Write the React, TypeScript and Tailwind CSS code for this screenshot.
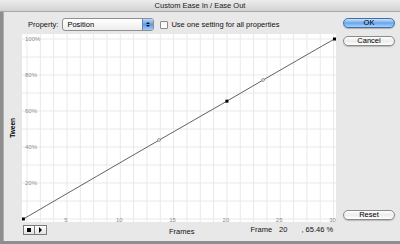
import React from 'react';

const FONT = "font-['Liberation_Sans',Arial,sans-serif]";

// x position of a frame and y position of a percent, inside the plot svg
const fx = (f: number) => -8.3 + 10.66 * f;
const py = (p: number) => 185 - 1.8 * p;

const Chart: React.FC = () => {
    const hLines = Array.from({ length: 11 }, (_, i) => 5 + i * 18);
    const vLines = Array.from({ length: 24 }, (_, i) => 5 + i * 13.33);
    const pct = [100, 80, 60, 40, 20];
    const frames = [5, 10, 15, 20, 25, 30];

    const p0 = { x: fx(1) - 1, y: py(0) };
    const p1 = { x: fx(20), y: py(65.46) };
    const p2 = { x: fx(30) + 1, y: py(100) };
    const h1 = { x: 137, y: 106 };
    const h2 = { x: 241, y: 46 };

    return (
        <svg width="314" height="188" className="block">
            {hLines.map((y) => (
                <line key={'h' + y} x1="0" x2="314" y1={y} y2={y} stroke="#e9e9e9" strokeWidth="1" />
            ))}
            {vLines.map((x) => (
                <line key={'v' + x} x1={x} x2={x} y1="0" y2="188" stroke="#e9e9e9" strokeWidth="1" />
            ))}
            {pct.map((p) => (
                <text key={p} x="3" y={py(p) + 2} fontSize="6" fill="#8e8e8e" fontFamily="Liberation Sans, Arial, sans-serif">
                    {p}%
                </text>
            ))}
            {frames.map((f) => (
                <text key={f} x={fx(f) - 1} y="188" fontSize="6" fill="#8e8e8e" textAnchor="middle" fontFamily="Liberation Sans, Arial, sans-serif">
                    {f}
                </text>
            ))}
            <path
                d={`M${p0.x} ${p0.y} C${p0.x + 60} ${p0.y - 35} ${h1.x} ${h1.y} ${p1.x} ${p1.y} C${h2.x} ${h2.y} ${p2.x - 30} ${p2.y + 17} ${p2.x} ${p2.y}`}
                fill="none"
                stroke="#3a3a3a"
                strokeWidth="0.8"
            />
            <circle cx={h1.x} cy={h1.y} r="1.4" fill="#fff" stroke="#555" strokeWidth="0.6" />
            <circle cx={h2.x} cy={h2.y} r="1.4" fill="#fff" stroke="#555" strokeWidth="0.6" />
            <rect x={p0.x - 1.5} y={p0.y - 1.5} width="3" height="3" fill="#000" />
            <rect x={p1.x - 1.5} y={p1.y - 1.5} width="3" height="3" fill="#000" />
            <rect x={p2.x - 1.5} y={p2.y - 1.5} width="3" height="3" fill="#000" />
        </svg>
    );
};

const AquaButton: React.FC<{ label: string; primary?: boolean }> = ({ label, primary }) => (
    <div
        className={
            primary
                ? 'h-[10px] w-[52px] rounded-full border border-[#3c6fb0] bg-gradient-to-b from-[#cfe4fb] via-[#6aa6ea] to-[#a9d2fb] flex items-center justify-center text-[7.5px] leading-none text-black shadow-[0_1px_1px_rgba(0,0,0,0.25)]'
                : 'h-[10px] w-[52px] rounded-full border border-[#8a8a8a] bg-gradient-to-b from-[#ffffff] via-[#ececec] to-[#ffffff] flex items-center justify-center text-[7.5px] leading-none text-black shadow-[0_1px_1px_rgba(0,0,0,0.2)]'
        }
    >
        {label}
    </div>
);

export default function App() {
    return (
        <div className={`w-[400px] h-[244px] flex flex-col bg-[#8e8e8e] ${FONT} select-none overflow-hidden`}>
            {/* Title bar */}
            <div className="h-[12px] shrink-0 bg-gradient-to-b from-[#ededed] to-[#d2d2d2] border-b border-[#a6a6a6] flex items-center justify-center">
                <span className="text-[7.5px] leading-none text-[#1a1a1a]">Custom Ease In / Ease Out</span>
            </div>

            {/* Body */}
            <div className="flex-1 flex ml-[3px] mb-[3px] bg-[#e8e8e8] border-l border-[#b0b0b0]">
                {/* Main column */}
                <div className="w-[332px] flex flex-col pt-[6px]">
                    {/* Property row */}
                    <div className="h-[13px] flex items-center pl-[24px]">
                        <span className="text-[7.5px] leading-none text-[#111]">Property:</span>
                        <div className="ml-[4px] w-[92px] h-[13px] flex rounded-[3px] border border-[#8f8f8f] bg-gradient-to-b from-[#ffffff] to-[#ededed] overflow-hidden">
                            <span className="flex-1 pl-[4px] flex items-center text-[7.5px] leading-none text-black">Position</span>
                            <div className="w-[11px] bg-gradient-to-b from-[#b9d8fa] via-[#5d9ee8] to-[#9fcbf7] border-l border-[#5f87b8] flex flex-col items-center justify-center gap-[1px]">
                                <div className="w-0 h-0 border-l-[2px] border-r-[2px] border-b-[2px] border-l-transparent border-r-transparent border-b-[#111]" />
                                <div className="w-0 h-0 border-l-[2px] border-r-[2px] border-t-[2px] border-l-transparent border-r-transparent border-t-[#111]" />
                            </div>
                        </div>
                        <div className="ml-[6px] w-[8px] h-[8px] rounded-[1px] border border-[#8a8a8a] bg-gradient-to-b from-[#f4f4f4] to-[#ffffff]" />
                        <span className="ml-[3px] text-[7.5px] leading-none text-[#111]">Use one setting for all properties</span>
                    </div>

                    {/* Chart */}
                    <div className="mt-[3px] h-[188px] flex">
                        <div className="w-[18px] flex items-center justify-center">
                            <span className="[writing-mode:vertical-rl] rotate-180 text-[6.5px] font-bold leading-none text-black">Tween</span>
                        </div>
                        <div className="w-[314px] bg-white">
                            <Chart />
                        </div>
                    </div>

                    {/* Bottom row */}
                    <div className="mt-[2px] h-[12px] flex items-center">
                        <div className="ml-[19px] flex">
                            <div className="w-[12px] h-[10px] border border-[#7a7a7a] bg-gradient-to-b from-[#ffffff] to-[#e2e2e2] flex items-center justify-center">
                                <div className="w-[4px] h-[4px] bg-black" />
                            </div>
                            <div className="w-[12px] h-[10px] border border-l-0 border-[#7a7a7a] bg-gradient-to-b from-[#ffffff] to-[#e2e2e2] flex items-center justify-center">
                                <div className="w-0 h-0 border-t-[3px] border-b-[3px] border-l-[3px] border-t-transparent border-b-transparent border-l-black" />
                            </div>
                        </div>
                        <span className="ml-[122px] mt-[4px] text-[7.5px] leading-none text-[#111]">Frames</span>
                        <div className="ml-[56px] -mt-[1px] flex text-[7.5px] leading-none text-[#111]">
                            <span>Frame</span>
                            <span className="ml-[7px]">20</span>
                            <span className="ml-[14px]">, 65.46 %</span>
                        </div>
                    </div>
                </div>

                {/* Right column */}
                <div className="ml-[7px] w-[52px] flex flex-col pt-[6px] pb-[21px]">
                    <AquaButton label="OK" primary />
                    <div className="mt-[8px]">
                        <AquaButton label="Cancel" />
                    </div>
                    <div className="mt-auto">
                        <AquaButton label="Reset" />
                    </div>
                </div>
            </div>
        </div>
    );
}
